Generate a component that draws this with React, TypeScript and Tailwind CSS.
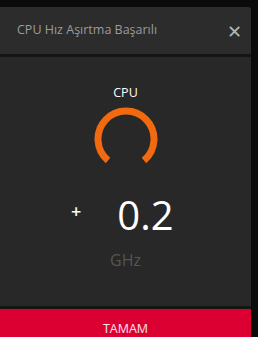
import React from "react";

const Gauge = () => {
  // 280 degree arc, open at the bottom
  const r = 28;
  const cx = 32;
  const cy = 32;
  const a0 = ((90 + 40) * Math.PI) / 180;
  const a1 = ((90 - 40 + 360) * Math.PI) / 180;
  const x0 = cx + r * Math.cos(a0);
  const y0 = cy + r * Math.sin(a0);
  const x1 = cx + r * Math.cos(a1);
  const y1 = cy + r * Math.sin(a1);
  return (
    <svg width="64" height="58" viewBox="0 0 64 58">
      <path
        d={`M ${x0} ${y0} A ${r} ${r} 0 1 1 ${x1} ${y1}`}
        fill="none"
        stroke="#f26a10"
        strokeWidth="7"
      />
    </svg>
  );
};

export default function App() {
  return (
    <div
      className="w-[258px] h-[337px] bg-[#0b0b0b] pt-[7px] overflow-hidden"
      style={{ fontFamily: '"Open Sans", "Noto Sans", sans-serif' }}
    >
      <div className="w-[251px] h-[330px] flex flex-col">
        <div className="h-[47px] bg-[#2c2c2c] rounded-tr-[3px] flex items-center justify-between pl-[17px] pr-[9px]">
          <span className="text-[12.5px] text-[#9b9b9b]">CPU Hız Aşırtma Başarılı</span>
          <span className="text-[#b5b5b5] text-[18px] leading-none font-light">✕</span>
        </div>
        <div className="h-[3px] bg-[#151515]" />
        <div className="flex-1 bg-[#282828] flex flex-col items-center">
          <div className="mt-[30px] text-[12.5px] text-white leading-none">CPU</div>
          <div className="mt-[7px]">
            <Gauge />
          </div>
          <div className="mt-[32px] w-full flex items-center h-[36px]">
            <span className="ml-[71px] mb-[8px] text-white text-[18px] font-semibold leading-none">+</span>
            <span className="ml-[36px] text-white text-[40px] leading-none">0.2</span>
          </div>
          <div className="mt-[19px] text-[16px] text-[#555555] leading-none">GHz</div>
        </div>
        <div className="h-[3px] bg-[#151515]" />
        <div className="h-[28px] bg-[#dc0032] flex items-end justify-center pb-[2px]">
          <span className="text-[12.5px] text-white/90 leading-none">TAMAM</span>
        </div>
      </div>
    </div>
  );
}
